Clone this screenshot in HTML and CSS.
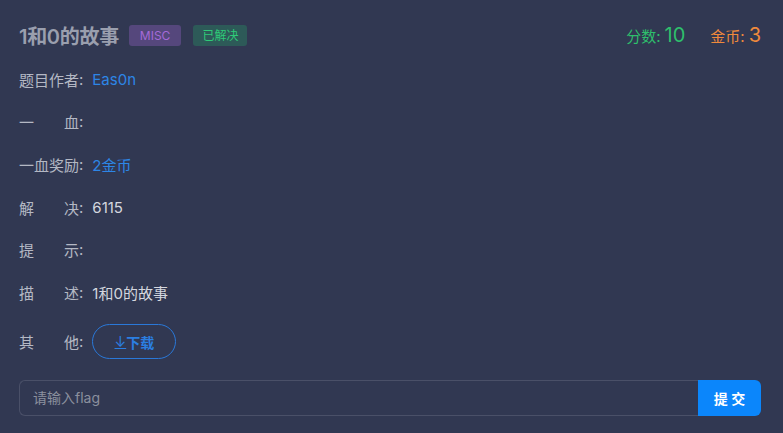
FILE: index.html
```html
<!DOCTYPE html>
<html lang="zh">
<head>
<meta charset="utf-8">
<link rel="stylesheet" href="styles.css">
</head>
<body>
<div class="panel">
  <div class="head">
    <div class="title-wrap">
      <h1 class="title">1和0的故事</h1>
      <span class="badge badge-misc">MISC</span>
      <span class="badge badge-solved">已解决</span>
    </div>
    <div class="stats">
      <span class="stat stat-score"><span class="stat-label">分数:</span><span class="stat-num">10</span></span>
      <span class="stat stat-coin"><span class="stat-label">金币:</span><span class="stat-num">3</span></span>
    </div>
  </div>
  <div class="rows">
    <div class="row"><span class="label">题目作者</span><span class="colon">:</span><span class="value link">Eas0n</span></div>
    <div class="row"><span class="label">一血</span><span class="colon">:</span><span class="value"></span></div>
    <div class="row"><span class="label">一血奖励</span><span class="colon">:</span><span class="value link">2金币</span></div>
    <div class="row"><span class="label">解决</span><span class="colon">:</span><span class="value">6115</span></div>
    <div class="row"><span class="label">提示</span><span class="colon">:</span><span class="value"></span></div>
    <div class="row"><span class="label">描述</span><span class="colon">:</span><span class="value">1和0的故事</span></div>
    <div class="row row-btn"><span class="label">其他</span><span class="colon">:</span><button class="dl-btn"><span class="dl-arrow">↓</span>下载</button></div>
  </div>
  <form class="flag-form">
    <input class="flag-input" type="text" placeholder="请输入flag">
    <button class="submit" type="button">提 交</button>
  </form>
</div>
</body>
</html>
```
FILE: styles.css
```css
html, body {
  margin: 0;
  padding: 0;
  background: #313852;
}
body {
  font-family: Inter, "Noto Sans CJK SC", sans-serif;
  color: #b4b8c4;
  width: 783px;
  height: 433px;
  overflow: hidden;
}
.panel {
  padding: 20px 22px 0 19px;
}
.head {
  display: flex;
  align-items: center;
  justify-content: space-between;
  height: 30px;
}
.title-wrap {
  display: flex;
  align-items: center;
}
.title {
  margin: 0;
  font-size: 20px;
  font-weight: 600;
  color: #9a9fae;
  letter-spacing: -0.3px;
}
.badge {
  display: inline-block;
  font-size: 12px;
  line-height: 21px;
  height: 21px;
  padding: 0 11px;
  border-radius: 3px;
}
.badge-misc {
  margin-left: 10px;
  background: #55477c;
  color: #a46ad8;
}
.badge-solved {
  margin-left: 12px;
  padding: 0 9px;
  background: #2d5a58;
  color: #2fcb78;
}
.stats {
  display: flex;
  align-items: baseline;
  gap: 25px;
}
.stat {
  display: flex;
  align-items: baseline;
}
.stat-label {
  font-size: 15px;
  margin-right: 4px;
}
.stat-num {
  font-size: 20px;
}
.stat-score { color: #2ebf6c; }
.stat-coin { color: #f08a3c; }
.rows {
  margin-top: 8px;
  display: flex;
  flex-direction: column;
}
.row {
  display: flex;
  align-items: center;
  height: 42.6px;
  font-size: 15px;
}
.label {
  display: inline-block;
  width: 60px;
  text-align: justify;
  text-align-last: justify;
  color: #b4b8c4;
}
.colon {
  margin-right: 9px;
  color: #b4b8c4;
}
.value {
  color: #d4d7df;
}
.link {
  color: #2d86e6;
}
.row-btn {
  height: 56px;
}
.dl-btn {
  width: 84px;
  height: 35px;
  border: 1px solid #2a78d8;
  border-radius: 18px;
  background: transparent;
  color: #2b7fe2;
  font-family: Inter, "Noto Sans CJK SC", sans-serif;
  font-size: 14px;
  font-weight: 700;
  padding: 0;
  display: flex;
  align-items: center;
  justify-content: center;
}
.dl-arrow {
  font-weight: 400;
  text-decoration: underline;
}
.flag-form {
  margin-top: 10px;
  display: flex;
  height: 36px;
}
.flag-input {
  flex: 1;
  box-sizing: border-box;
  height: 36px;
  background: transparent;
  border: 1px solid #4a5068;
  border-right: none;
  border-radius: 6px 0 0 6px;
  padding: 0 13px;
  font-family: Inter, "Noto Sans CJK SC", sans-serif;
  font-size: 14px;
  color: #d4d7df;
  outline: none;
}
.flag-input::placeholder {
  color: #8b909e;
}
.submit {
  width: 63px;
  height: 36px;
  border: none;
  background: #0b86fb;
  color: #ffffff;
  font-family: Inter, "Noto Sans CJK SC", sans-serif;
  font-size: 14px;
  font-weight: 700;
  border-radius: 0 6px 6px 0;
  padding: 0;
}
```
